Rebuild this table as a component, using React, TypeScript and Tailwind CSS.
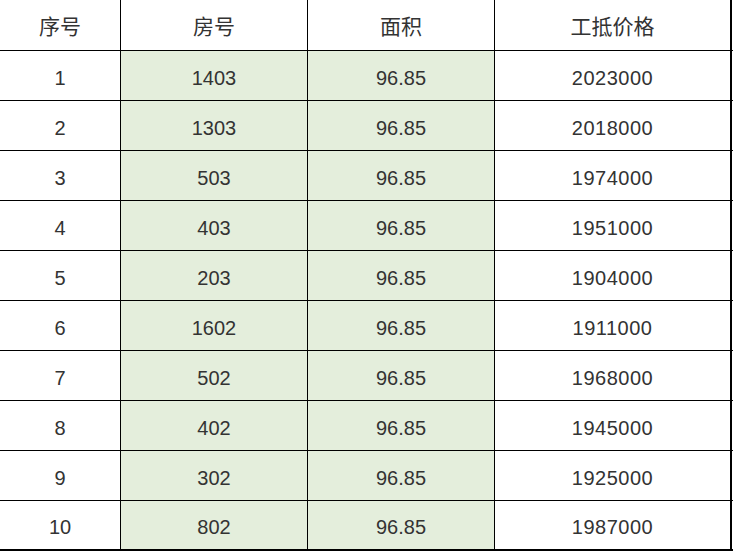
import React from "react";

const rows: [string, string, string, string][] = [
  ["1", "1403", "96.85", "2023000"],
  ["2", "1303", "96.85", "2018000"],
  ["3", "503", "96.85", "1974000"],
  ["4", "403", "96.85", "1951000"],
  ["5", "203", "96.85", "1904000"],
  ["6", "1602", "96.85", "1911000"],
  ["7", "502", "96.85", "1968000"],
  ["8", "402", "96.85", "1945000"],
  ["9", "302", "96.85", "1925000"],
  ["10", "802", "96.85", "1987000"],
];

export default function App() {
  return (
    <div
      className="w-[733px] h-[551px] bg-white text-[#333333] overflow-hidden"
      style={{ fontFamily: '"Liberation Sans", "Noto Sans CJK SC", sans-serif' }}
    >
      <div className="w-[733px]">
        <div className="grid grid-cols-[121px_187px_187px_238px] h-[51px] border-b border-black">
          <div className="flex items-center justify-center border-r border-black pt-[3px] text-[21px]">序号</div>
          <div className="flex items-center justify-center border-r border-black pt-[3px] text-[21px]">房号</div>
          <div className="flex items-center justify-center border-r border-black pt-[3px] text-[21px]">面积</div>
          <div className="flex items-center justify-center border-r-2 border-black pt-[3px] text-[21px] w-[237px]">工抵价格</div>
        </div>
        {rows.map((r, i) => (
          <div
            key={i}
            className={`grid grid-cols-[121px_187px_187px_238px] h-[50px] border-black ${
              i === rows.length - 1 ? "border-b-2" : "border-b"
            }`}
          >
            <div className="flex items-center justify-center border-r border-black pt-[4px] text-[20px]">{r[0]}</div>
            <div className="flex items-center justify-center border-r border-black bg-[#e4eedc] pt-[4px] text-[20px]">{r[1]}</div>
            <div className="flex items-center justify-center border-r border-black bg-[#e4eedc] pt-[4px] text-[20px]">{r[2]}</div>
            <div className="flex items-center justify-center border-r-2 border-black pt-[4px] text-[20px] tracking-[0.5px] w-[237px]">{r[3]}</div>
          </div>
        ))}
      </div>
    </div>
  );
}
